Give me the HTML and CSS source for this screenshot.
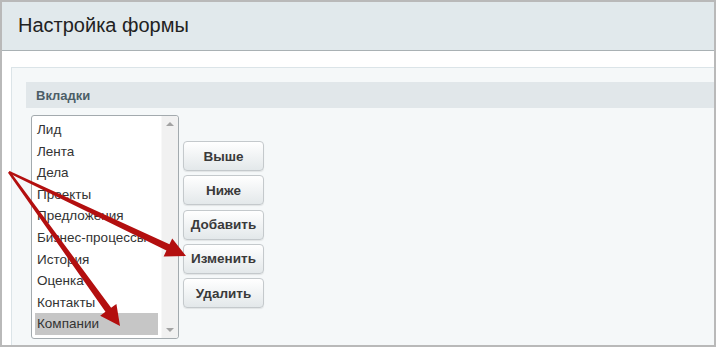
FILE: index.html
```html
<!DOCTYPE html>
<html lang="ru">
<head>
  <meta charset="UTF-8" />
  <title>Настройка формы</title>
  <link rel="stylesheet" href="styles.css">
</head>
<body>
  <div class="frame">
    <div class="header">Настройка формы</div>

    <div class="panel">
      <div class="section-title">Вкладки</div>

      <div class="tabs-row">
        <!-- Список вкладок -->
        <div class="listbox">
          <ul class="items">
            <li>Лид</li>
            <li>Лента</li>
            <li>Дела</li>
            <li>Проекты</li>
            <li>Предложения</li>
            <li>Бизнес-процессы</li>
            <li>История</li>
            <li>Оценка</li>
            <li>Контакты</li>
            <li class="selected">Компании</li>
          </ul>
          <div class="scrollbar">
            <span class="arrow-up"></span>
            <span class="arrow-down"></span>
          </div>
        </div>

        <!-- Кнопки -->
        <div class="buttons">
          <button>Выше</button>
          <button>Ниже</button>
          <button>Добавить</button>
          <button>Изменить</button>
          <button>Удалить</button>
        </div>
      </div>
    </div>

    <!-- Стрелки-пометки поверх формы -->
    <svg class="marks" width="716" height="347" viewBox="0 0 716 347">
      <polygon points="9.51,170.92 169.43,244.26 172.22,238.39 186,256 163.64,256.46 166.43,250.58 8.49,173.08" />
      <polygon points="9.97,171.3 111.14,307.73 116.41,303.93 120,326 100.19,315.63 105.46,311.83 8.03,172.7" />
    </svg>
  </div>
</body>
</html>
```

FILE: styles.css
```css
* {
  box-sizing: border-box;
  margin: 0;
  padding: 0;
}

body {
  font-family: "Liberation Sans", Arial, sans-serif;
  background: #ffffff;
}

.frame {
  position: relative;
  width: 716px;
  height: 347px;
  border: 2px solid #b9b9b9;
  overflow: hidden;
  background: #ffffff;
}

.header {
  height: 49px;
  background: #e1e9ec;
  border-bottom: 1px solid #a9b1b4;
  padding: 12px 0 0 16px;
  font-size: 20px;
  color: #222;
}

.panel {
  margin: 16px 0 0 9px;
  width: 720px;
  height: 300px;
  border: 1px solid #dbe4e8;
  background: #f5f8f9;
  padding: 14px;
}

.section-title {
  height: 26px;
  background: #e1e7ea;
  padding: 6px 0 0 10px;
  font-size: 13px;
  font-weight: bold;
  color: #4d5e67;
}

.tabs-row {
  display: flex;
  align-items: flex-start;
  margin: 7px 0 0 5px;
}

.listbox {
  display: flex;
  width: 148px;
  height: 224px;
  border: 1px solid #a3aaae;
  border-radius: 3px;
  background: #ffffff;
  padding: 3px 0 3px 3px;
}

.items {
  list-style: none;
  width: 123px;
}

.items li {
  height: 21.6px;
  line-height: 21.6px;
  padding-left: 2px;
  font-size: 13.5px;
  color: #333;
  white-space: nowrap;
  overflow: hidden;
}

.items li.selected {
  background: #c6c6c6;
}

.scrollbar {
  display: flex;
  flex-direction: column;
  justify-content: space-between;
  align-items: center;
  width: 17px;
  margin: -3px 0 -3px 3px;
  padding: 6px 0 6px;
  background: #f1f1f1;
  border-left: 1px solid #f8f8f8;
  border-radius: 0 3px 3px 0;
}

.arrow-up {
  width: 0;
  height: 0;
  border-left: 4px solid transparent;
  border-right: 4px solid transparent;
  border-bottom: 4px solid #a3a3a3;
}

.arrow-down {
  width: 0;
  height: 0;
  border-left: 4px solid transparent;
  border-right: 4px solid transparent;
  border-top: 4px solid #a3a3a3;
}

.buttons {
  display: flex;
  flex-direction: column;
  gap: 4.3px;
  margin: 26px 0 0 4px;
}

.buttons button {
  width: 81px;
  height: 30px;
  border: 1px solid #c4c9cc;
  border-radius: 4px;
  background: linear-gradient(#ffffff, #e3e8ea);
  box-shadow: 0 1px 1px rgba(0, 0, 0, 0.08);
  font-family: "Liberation Sans", Arial, sans-serif;
  font-size: 13.5px;
  font-weight: bold;
  color: #3a3a3a;
  cursor: pointer;
}

.marks {
  position: absolute;
  top: -2px;
  left: -2px;
  pointer-events: none;
}

.marks polygon {
  fill: #b30f0f;
}
```
